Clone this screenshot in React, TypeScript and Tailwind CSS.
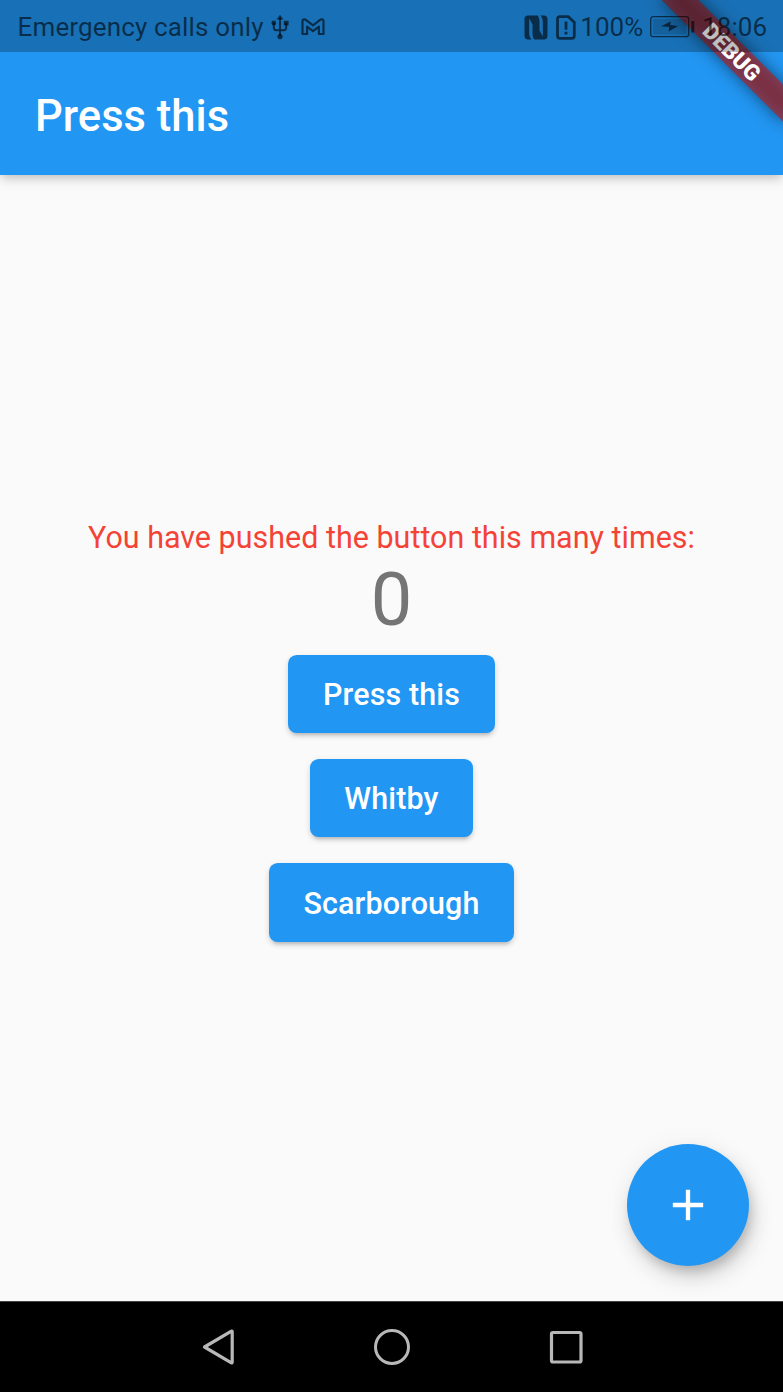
import { useState } from "react";

function UsbIcon() {
  return (
    <svg className="h-[26px] w-[18px]" viewBox="0 0 18 26" fill="none" stroke="currentColor" strokeWidth="2">
      <path d="M9 4v18M2.8 9v4.5c0 1.8 1 2.7 2.6 2.7h7.2c1.6 0 2.6-.9 2.6-2.7V9" />
      <path d="M5.6 5.6L9 .8l3.4 4.8z" fill="currentColor" stroke="none" />
      <circle cx="9" cy="22.6" r="2.6" fill="currentColor" stroke="none" />
      <circle cx="2.8" cy="9" r="2.4" fill="currentColor" stroke="none" />
      <path d="M12.8 6.8h4.8v4.6h-4.8z" fill="currentColor" stroke="none" />
    </svg>
  );
}

function MailIcon() {
  return (
    <svg className="h-[18px] w-[24px]" viewBox="0 0 24 18" fill="none" stroke="currentColor" strokeWidth="2.2" strokeLinejoin="round">
      <path d="M1.500 16V3.200C1.500 1.200 3.600.9 4.900 1.900L12 7.400l7.100-5.500c1.300-1 3.400-.7 3.400 1.300V16h-4.600V8.600L12 13.100 6.100 8.600V16z" />
    </svg>
  );
}

function NfcIcon() {
  return (
    <svg className="h-[25px] w-[24px]" viewBox="0 0 24 25" fill="currentColor">
      <path
        fillRule="evenodd"
        d="M4 .5h16c2.300 0 3.500 1.200 3.500 3.500v17c0 2.300-1.200 3.500-3.500 3.500H4C1.700 24.500.5 23.300.5 21V4C.5 1.700 1.700.5 4 .5zM5.200 3.500v14.500c0 2.500.8 4.700 2.300 6.500h2.700c-1.200-1.800-1.700-3.800-1.700-6.300V9.500zM18.800 21.500V7c0-2.500-.8-4.700-2.300-6.500h-2.700c1.200 1.800 1.700 3.800 1.700 6.300v8.700z"
      />
    </svg>
  );
}

function SimAlertIcon() {
  return (
    <svg className="h-[25px] w-[20px]" viewBox="0 0 20 25" fill="none" stroke="currentColor" strokeWidth="2.800">
      <path d="M4 1.700h8.300l6 5.600v13.400c0 1.700-.9 2.600-2.500 2.600H4c-1.700 0-2.500-.9-2.500-2.600V4.300c0-1.700.8-2.600 2.500-2.600z" />
      <path d="M10 6.500v8.300M10 16.800v2.700" />
    </svg>
  );
}

function BatteryIcon() {
  return (
    <svg className="h-[22px] w-[45px]" viewBox="0 0 45 22" fill="none">
      <rect x=".7" y=".7" width="38" height="20" rx="2.500" stroke="currentColor" strokeWidth="1.300" />
      <rect x="3" y="3" width="33.500" height="15.500" rx="1" fill="currentColor" fillOpacity=".22" />
      <path d="M41.300 5h3v11.500h-3z" fill="currentColor" />
      <path d="M11 10.300l9.800-4.800-.6 3.500 8 1-9.600 5.500.7-4.500z" fill="currentColor" />
    </svg>
  );
}

function StatusBar() {
  return (
    <div className="relative z-20 flex h-[52px] items-center justify-between bg-black/25 pr-[16px] pl-[17.5px] text-[26px] text-black/60">
      <div className="flex items-center pt-[2px]">
        <span className="whitespace-nowrap tracking-[0.15px]">Emergency calls only</span>
        <span className="ml-[7.5px]"><UsbIcon /></span>
        <span className="ml-[12px]"><MailIcon /></span>
      </div>
      <div className="flex items-center pt-[2px]">
        <NfcIcon />
        <span className="ml-[8px]"><SimAlertIcon /></span>
        <span className="ml-[4px]">100%</span>
        <span className="ml-[7px]"><BatteryIcon /></span>
        <span className="ml-[7px]">18:06</span>
      </div>
    </div>
  );
}

function DebugBanner() {
  return (
    <div className="absolute top-0 right-0 z-10 size-[200px] overflow-hidden">
      <div className="absolute top-[39px] left-[62px] h-[26px] w-[174px] rotate-45">
        <div className="absolute inset-0 bg-black/50 blur-[8.6px]" />
        <div className="absolute inset-0 flex items-center justify-center bg-[#b71c1c]/63 text-[22.2px] leading-none font-black text-white">
          DEBUG
        </div>
      </div>
    </div>
  );
}

function RaisedButton({ label, onClick }: { label: string; onClick: () => void }) {
  return (
    <button
      onClick={onClick}
      className="my-[13.05px] h-[78.3px] rounded-[8.7px] bg-[#2196f3] px-[34.8px] pt-[2px] text-[30.45px] font-medium tracking-[0.14px] whitespace-nowrap text-white shadow-[0_6px_3px_-4px_rgba(0,0,0,0.12),0_3px_5px_0_rgba(0,0,0,0.12),0_2px_9px_0_rgba(0,0,0,0.06)]"
    >
      {label}
    </button>
  );
}

function NavigationBar() {
  return (
    <nav className="h-[91px] border-t border-[#444] bg-black text-[#b8b8b8]">
      <div className="flex h-full items-center justify-center gap-[134px] pb-px">
        <svg className="size-[40px]" viewBox="0 0 40 40" fill="none" stroke="currentColor" strokeWidth="3.2" strokeLinejoin="round">
          <path d="M6.500 20L33.400 4.200q.8-.3.800.500v30.600q0 .8-.8.500z" />
        </svg>
        <svg className="size-[40px]" viewBox="0 0 40 40" fill="none" stroke="currentColor" strokeWidth="3">
          <circle cx="20" cy="20" r="16.500" />
        </svg>
        <svg className="size-[40px]" viewBox="0 0 40 40" fill="none" stroke="currentColor" strokeWidth="3.2">
          <rect x="5.500" y="5.500" width="29.500" height="29.500" rx="1.500" />
        </svg>
      </div>
    </nav>
  );
}

export default function App() {
  const [count, setCount] = useState(0);
  const increment = () => setCount((value) => value + 1);

  return (
    <div className="relative flex h-[1392px] w-[783px] flex-col overflow-hidden bg-[#fafafa] font-[Roboto,sans-serif]">
      <header className="flex h-[175px] flex-col bg-[#2196f3] shadow-[0_4px_9px_-2px_rgba(0,0,0,0.18),0_6px_12px_0_rgba(0,0,0,0.08)]">
        <StatusBar />
        <h1 className="flex flex-1 items-center pt-[6px] pl-[35px] text-[43.5px] font-medium tracking-[0.03px] text-white">
          Press this
        </h1>
      </header>
      <DebugBanner />
      <main className="relative flex h-[1126px] flex-col items-center justify-center pb-[2px]">
        <p className="pt-[1px] text-[30.45px] leading-[35.7px] tracking-[0.025px] text-[#f44336]">
          You have pushed the button this many times:
        </p>
        <p className="pt-[2px] text-[73.95px] leading-[83.700px] text-[#757575]">{count}</p>
        <RaisedButton label="Press this" onClick={increment} />
        <RaisedButton label="Whitby" onClick={increment} />
        <RaisedButton label="Scarborough" onClick={increment} />
        <button
          aria-label="Increment"
          onClick={increment}
          className="absolute right-[34px] bottom-[35px] flex size-[122px] items-center justify-center rounded-full bg-[#2196f3] text-white shadow-[3px_7px_11px_-2px_rgba(0,0,0,0.18),5px_13px_22px_0_rgba(0,0,0,0.13),0_2px_30px_0_rgba(0,0,0,0.05)]"
        >
          <svg className="size-[52px]" viewBox="0 0 24 24" fill="currentColor">
            <path d="M19 13h-6v6h-2v-6H5v-2h6V5h2v6h6v2z" />
          </svg>
        </button>
      </main>
      <NavigationBar />
    </div>
  );
}
